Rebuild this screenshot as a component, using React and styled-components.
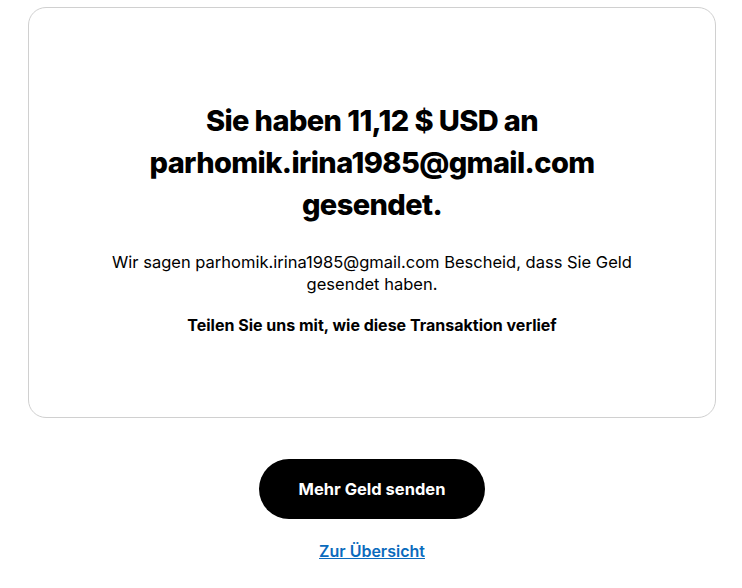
import React from "react";
import styled, { createGlobalStyle } from "styled-components";

const Global = createGlobalStyle`
  html, body { margin: 0; padding: 0; background: #ffffff; }
  body { font-family: Inter, "Noto Sans", sans-serif; color: #000; }
`;

const Page = styled.main`
  display: flex;
  flex-direction: column;
  align-items: center;
  padding: 7px 26px 0 28px;
`;

const Card = styled.section`
  box-sizing: border-box;
  width: 100%;
  border: 1px solid #d0d0d0;
  border-radius: 18px;
  padding: 92px 40px 81px;
  display: flex;
  flex-direction: column;
  align-items: center;
  text-align: center;
`;

const Title = styled.h1`
  margin: 0;
  max-width: 470px;
  font-size: 29px;
  line-height: 42px;
  font-weight: 800;
  letter-spacing: -0.6px;
`;

const Text = styled.p`
  margin: ${(p) => p.$mt || 0}px 0 0;
  max-width: 560px;
  font-size: ${(p) => (p.$bold ? 16 : 16.5)}px;
  line-height: 22px;
  font-weight: ${(p) => (p.$bold ? 700 : 400)};
`;

const Button = styled.button`
  margin-top: 41px;
  width: 226px;
  height: 60px;
  border: none;
  border-radius: 30px;
  background: #000;
  color: #fff;
  font-family: Inter, "Noto Sans", sans-serif;
  font-size: 16.5px;
  font-weight: 700;
  cursor: pointer;
`;

const Link = styled.a`
  margin-top: 21px;
  font-size: 16px;
  line-height: 22px;
  font-weight: 600;
  color: #0a6bbd;
  text-decoration: underline;
`;

export default function App() {
  return (
    <>
      <Global />
      <Page>
        <Card>
          <Title>Sie haben 11,12 $ USD an parhomik.irina1985@gmail.com gesendet.</Title>
          <Text $mt={25}>
            Wir sagen parhomik.irina1985@gmail.com Bescheid, dass Sie Geld gesendet haben.
          </Text>
          <Text $mt={19} $bold>
            Teilen Sie uns mit, wie diese Transaktion verlief
          </Text>
        </Card>
        <Button>Mehr Geld senden</Button>
        <Link href="#">Zur Übersicht</Link>
      </Page>
    </>
  );
}
